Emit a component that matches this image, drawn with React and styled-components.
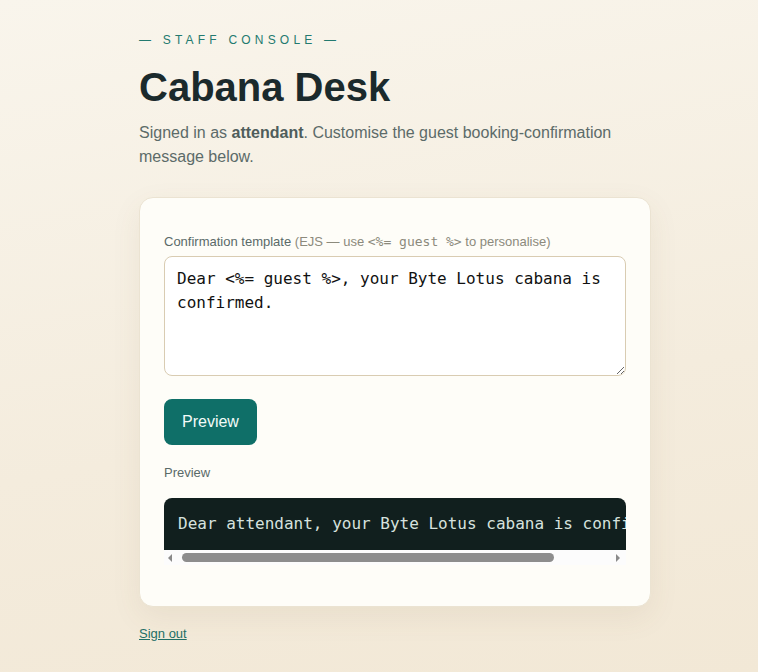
import React, { useState } from 'react';
import styled, { createGlobalStyle } from 'styled-components';

const GlobalStyle = createGlobalStyle`
  html, body {
    margin: 0;
    padding: 0;
  }
  body {
    min-height: 100vh;
    font-family: "Liberation Sans", Arial, sans-serif;
    background: linear-gradient(170deg, #f9f5ec 0%, #f4ecdd 60%, #f2e8d6 100%);
    color: #1b2a2b;
  }
`;

const Page = styled.main`
  width: 512px;
  margin-left: calc(50% - 240px);
  padding: 31px 0 24px;
`;

const Kicker = styled.div`
  font-size: 12px;
  letter-spacing: 4.2px;
  text-transform: uppercase;
  color: #237a6f;
  line-height: 18px;
`;

const Title = styled.h1`
  margin: 14px 0 0;
  font-size: 40px;
  line-height: 48px;
  font-weight: 700;
  color: #1b2a2c;
`;

const Lead = styled.p`
  margin: 10px 0 0;
  font-size: 16px;
  line-height: 24px;
  color: #5c6b69;

  strong {
    color: #4f5d5b;
  }
`;

const Card = styled.section`
  margin-top: 28px;
  background: #fefdf8;
  border: 1px solid #ebe3d2;
  border-radius: 14px;
  box-shadow: 0 10px 30px rgba(120, 95, 50, 0.08);
  padding: 35px 24px 41px;
`;

const Label = styled.label`
  display: block;
  font-size: 13px;
  line-height: 18px;
  color: #5a6a68;
  margin-bottom: 5px;
`;

const Hint = styled.span`
  color: #8c8a7c;
`;

const Code = styled.code`
  font-family: "DejaVu Sans Mono", "Liberation Mono", monospace;
  font-size: 13px;
`;

const Template = styled.textarea`
  display: block;
  box-sizing: border-box;
  width: 100%;
  height: 120px;
  padding: 10px 12px;
  border: 1px solid #d9ccb2;
  border-radius: 8px;
  background: #fff;
  font-family: "DejaVu Sans Mono", "Liberation Mono", monospace;
  font-size: 16px;
  line-height: 24px;
  color: #111;
  resize: vertical;
  outline: none;
`;

const Button = styled.button`
  margin-top: 23px;
  height: 46px;
  padding: 0 18px;
  border: none;
  border-radius: 8px;
  background: #0f6f68;
  color: #f3fbf8;
  font-family: "Liberation Sans", Arial, sans-serif;
  font-size: 16px;
  cursor: pointer;
`;

const OutputLabel = styled.div`
  margin-top: 19px;
  font-size: 13px;
  line-height: 18px;
  color: #5a6a68;
`;

const OutputBox = styled.div`
  margin-top: 16px;
`;

const Output = styled.pre`
  margin: 0;
  padding: 14px;
  background: #111f1e;
  color: #d6e2de;
  border-radius: 8px 8px 0 0;
  font-family: "DejaVu Sans Mono", "Liberation Mono", monospace;
  font-size: 16px;
  line-height: 24px;
  white-space: pre;
  overflow: hidden;
`;

/* classic horizontal scrollbar under the preview */
const Track = styled.div`
  display: flex;
  align-items: center;
  height: 15px;
  padding: 0 6px 0 4px;
  background: #fcfcfc;
`;

const Arrow = styled.span`
  flex: none;
  width: 0;
  height: 0;
  border-top: 4px solid transparent;
  border-bottom: 4px solid transparent;
  ${(p) =>
    p.$dir === 'left'
      ? 'border-right: 4px solid #8a8a8a;'
      : 'border-left: 4px solid #8a8a8a;'}
`;

const Thumb = styled.div`
  flex: none;
  width: 372px;
  height: 9px;
  margin-left: 10px;
  border-radius: 5px;
  background: #8d8d8d;
`;

const Spacer = styled.div`
  flex: 1;
`;

const SignOut = styled.a`
  display: inline-block;
  margin-top: 19px;
  font-size: 13px;
  color: #1f6f66;
  text-decoration: underline;
`;

const render = (tpl, guest) => tpl.replace(/<%=\s*guest\s*%>/g, guest);

export default function App() {
  const [tpl, setTpl] = useState('Dear <%= guest %>, your Byte Lotus cabana is confirmed.');
  const [out, setOut] = useState(render(tpl, 'attendant'));

  return (
    <>
      <GlobalStyle />
      <Page>
        <Kicker>— Staff Console —</Kicker>
        <Title>Cabana Desk</Title>
        <Lead>
          Signed in as <strong>attendant</strong>. Customise the guest booking-confirmation message below.
        </Lead>
        <Card>
          <Label htmlFor="tpl">
            Confirmation template{' '}
            <Hint>
              (EJS — use <Code>&lt;%= guest %&gt;</Code> to personalise)
            </Hint>
          </Label>
          <Template id="tpl" value={tpl} onChange={(e) => setTpl(e.target.value)} />
          <Button onClick={() => setOut(render(tpl, 'attendant'))}>Preview</Button>
          <OutputLabel>Preview</OutputLabel>
          <OutputBox>
            <Output>{out}</Output>
            <Track>
              <Arrow $dir="left" />
              <Thumb />
              <Spacer />
              <Arrow $dir="right" />
            </Track>
          </OutputBox>
        </Card>
        <SignOut href="#">Sign out</SignOut>
      </Page>
    </>
  );
}
